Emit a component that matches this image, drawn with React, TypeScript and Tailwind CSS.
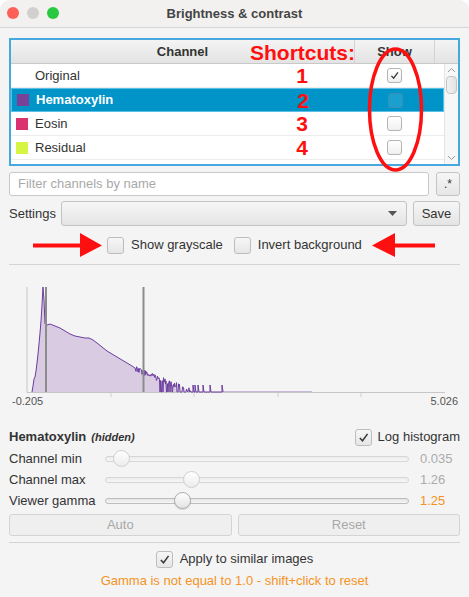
import React from "react";

type Channel = {
  name: string;
  color?: string;
  shortcut: string;
  show?: boolean;
  selected?: boolean;
};

const channels: Channel[] = [
  { name: "Original", shortcut: "1", show: true },
  { name: "Hematoxylin", color: "bg-[#7a4199]", shortcut: "2", selected: true },
  { name: "Eosin", color: "bg-[#d9326e]", shortcut: "3" },
  { name: "Residual", color: "bg-[#d6f542]", shortcut: "4" },
];

const Check = () => (
  <svg viewBox="0 0 16 16" className="h-full w-full">
    <path d="M3.5 8.5 L6.8 12 L13 3.5" fill="none" stroke="#3a3a3a" strokeWidth="1.9" />
  </svg>
);

// table cell checkbox
const TableBox = ({ checked, selected }: { checked?: boolean; selected?: boolean }) => (
  <div
    className={
      selected
        ? "h-[15px] w-[15px] rounded-[3px] border border-[#3b8fb5] bg-[#1a9fcf]"
        : "h-[15px] w-[15px] rounded-[3px] border border-[#b4b4b4] bg-gradient-to-b from-white to-[#f0f0f0] p-[1px]"
    }
  >
    {checked && <Check />}
  </div>
);

// regular form checkbox
const Box = ({ checked }: { checked?: boolean }) => (
  <div className="h-[17px] w-[17px] shrink-0 rounded-[3px] border border-[#bdbdbd] bg-gradient-to-b from-[#f6f6f6] to-[#e6e6e6] p-[1px]">
    {checked && <Check />}
  </div>
);

const Slider = ({ label, pos, value, highlight }: { label: string; pos: number; value: string; highlight?: boolean }) => (
  <div className="flex h-[21px] items-center">
    <span className="w-[96px] text-[13px] text-[#333]">{label}</span>
    <div className="relative flex h-[21px] w-[304px] items-center">
      <div
        className={
          highlight
            ? "h-[6px] w-full rounded-full border border-[#bdbdbd] bg-gradient-to-b from-[#e4e4e4] to-[#f6f6f6]"
            : "h-[6px] w-full rounded-full border border-[#d6d6d6] bg-gradient-to-b from-[#ececec] to-[#f7f7f7]"
        }
      />
      <div
        className={
          highlight
            ? "absolute top-[2px] h-[17px] w-[17px] rounded-full border border-[#a9a9a9] bg-gradient-to-b from-white to-[#e3e3e3] shadow-[0_1px_1px_rgba(0,0,0,0.15)]"
            : "absolute top-[2px] h-[17px] w-[17px] rounded-full border border-[#cfcfcf] bg-gradient-to-b from-white to-[#ececec]"
        }
        style={{ left: pos - 8.5 }}
      />
    </div>
    <span className={highlight ? "ml-[11px] text-[13px] text-[#f5931f]" : "ml-[11px] text-[13px] text-[#ababab]"}>
      {value}
    </span>
  </div>
);

// histogram curve in page coordinates
const head: [number, number][] = [
  [32, 392], [33, 386], [34, 379], [35, 377], [36, 371], [37, 363], [38, 354], [39, 344], [40, 333],
  [41, 321], [42, 305], [43, 287], [44, 300], [45, 324], [47, 325], [50, 324], [55, 326], [60, 328],
  [65, 331], [70, 334], [75, 336], [80, 337], [85, 338], [89, 338], [93, 340], [97, 343], [102, 347],
  [107, 351], [112, 354], [117, 357], [122, 360], [127, 363], [132, 366], [135, 368],
];

let seed = 12345;
const rand = () => {
  seed = (seed * 16807) % 2147483647;
  return seed / 2147483647;
};

const noisy: [number, number][] = [];
for (let x = 136; x <= 190; x += 0.5) {
  const base = Math.min(391, 369 + (x - 135) * 0.4);
  const dropChance = x < 154 ? 0 : x < 170 ? 0.2 : 0.4;
  const y = rand() < dropChance ? 392 : base + (rand() - 0.5) * 6;
  noisy.push([x, Math.min(392, y)]);
}

const spikes = [193, 195, 198, 203, 210, 222];

function Histogram() {
  const line = [...head, ...noisy].map(([x, y], i) => `${i ? "L" : "M"}${x} ${y.toFixed(1)}`).join(" ");
  const spikePath = spikes.map((x) => `L${x} 392 L${x} 385 L${x + 1} 392`).join(" ");
  const stroke = `${line} L191 392 ${spikePath}`;
  const fill = `${line} L191 392 Z`;
  return (
    <svg viewBox="9 265 451 145" width={451} height={145} className="block">
      <path d={fill} fill="#d8cbe2" />
      <line x1={223} y1={392} x2={312} y2={392} stroke="#b8a6cb" strokeWidth={1.5} />
      <line x1={27} y1={287} x2={27} y2={392.5} stroke="#c6c6c6" />
      <line x1={27} y1={392.5} x2={445} y2={392.5} stroke="#c6c6c6" />
      {[111, 194, 278, 361].map((x) => (
        <line key={x} x1={x} y1={393} x2={x} y2={397} stroke="#cfcfcf" />
      ))}
      <path d={stroke} fill="none" stroke="#6b3d9e" strokeWidth={1} />
      <line x1={46} y1={287} x2={46} y2={392} stroke="#8c8c8c" strokeWidth={2} />
      <line x1={143.5} y1={287} x2={143.5} y2={392} stroke="#8c8c8c" strokeWidth={2} />
      <text x={12} y={405} fontSize={11} fill="#555">-0.205</text>
      <text x={458} y={405} fontSize={11} fill="#555" textAnchor="end">5.026</text>
    </svg>
  );
}

export default function App() {
  return (
    <div className="relative h-[597px] w-[469px] overflow-hidden rounded-t-[10px] bg-[#f4f4f4] font-['Liberation_Sans',Arial,sans-serif] text-[#333]">
      {/* title bar */}
      <div className="relative flex h-[28px] items-center justify-center border-b border-[#d6d6d6] bg-[#f2f1f0]">
        <div className="absolute left-[7px] top-[7px] flex gap-[8px]">
          <span className="h-[12px] w-[12px] rounded-full bg-[#fe5f57]" />
          <span className="h-[12px] w-[12px] rounded-full bg-[#d1d0ce]" />
          <span className="h-[12px] w-[12px] rounded-full bg-[#28c840]" />
        </div>
        <span className="text-[13px] font-bold text-[#444]">Brightness &amp; contrast</span>
      </div>

      <div className="px-[9px]">
        {/* channel table */}
        <div className="mt-[10px] h-[128px] overflow-hidden border-2 border-[#45a8df] bg-white">
          <div className="flex h-[24px] border-b border-[#c9c9c9] bg-gradient-to-b from-[#f4f4f4] to-[#e3e3e3]">
            <div className="relative flex w-[344px] items-center justify-center border-r border-[#d2d2d2] text-[13px] font-bold text-[#333]">
              Channel
              <span className="absolute right-[-1px] top-[-3px] text-[21px] font-bold text-[#ff1010]">Shortcuts:</span>
            </div>
            <div className="flex w-[80px] items-center justify-center border-r border-[#d2d2d2] text-[13px] font-bold text-[#333]">
              Show
            </div>
            <div className="flex-1" />
          </div>
          <div className="flex h-[100px]">
            <div className="flex-1">
              {channels.map((c) => (
                <div
                  key={c.name}
                  className={
                    c.selected
                      ? "flex h-[24px] items-center border border-[#5cc0e6] bg-[#0094c8] text-white"
                      : "flex h-[24px] items-center border-b border-[#ececec] text-[#333]"
                  }
                >
                  <div className="flex w-[343px] items-center">
                    {c.color ? (
                      <span className={`ml-[5px] h-[12px] w-[12px] ${c.color}`} />
                    ) : (
                      <span className="ml-[5px] h-[12px] w-[12px]" />
                    )}
                    <span className={c.selected ? "ml-[7px] text-[13px] font-bold" : "ml-[7px] text-[13px]"}>
                      {c.name}
                    </span>
                    <span className="ml-auto mr-[37px] w-[30px] text-center text-[21px] font-bold leading-none text-[#ff1010]">
                      {c.shortcut}
                    </span>
                  </div>
                  <div className="flex w-[80px] justify-center">
                    <TableBox checked={c.show} selected={c.selected} />
                  </div>
                </div>
              ))}
            </div>
            {/* scrollbar */}
            <div className="flex w-[14px] flex-col items-center border-l border-[#e4e4e4] bg-[#f7f7f7]">
              <svg width="9" height="6" viewBox="0 0 9 6" className="mt-[3px]">
                <path d="M1 5 L4.5 1.5 L8 5" fill="none" stroke="#999" strokeWidth="1" />
              </svg>
              <div className="mt-[3px] h-[18px] w-[11px] rounded-[4px] border border-[#c4c4c4] bg-gradient-to-r from-[#f2f2f2] to-[#e2e2e2]" />
              <svg width="9" height="6" viewBox="0 0 9 6" className="mt-auto mb-[3px]">
                <path d="M1 1 L4.5 4.5 L8 1" fill="none" stroke="#999" strokeWidth="1" />
              </svg>
            </div>
          </div>
        </div>

        {/* filter */}
        <div className="mt-[6px] flex h-[24px] gap-[7px]">
          <div className="flex flex-1 items-center rounded-[3px] border border-[#c9c9c9] bg-white pl-[8px] text-[13px] text-[#a9a9a9]">
            Filter channels by name
          </div>
          <div className="flex w-[24px] items-center justify-center rounded-[3px] border border-[#c4c4c4] bg-gradient-to-b from-[#f6f6f6] to-[#e6e6e6] text-[12px] text-[#333]">
            .*
          </div>
        </div>

        {/* settings */}
        <div className="mt-[5px] flex h-[25px] items-center">
          <span className="w-[52px] text-[13px] text-[#333]">Settings</span>
          <div className="flex h-full w-[346px] items-center justify-end rounded-[3px] border border-[#c4c4c4] bg-gradient-to-b from-[#f6f6f6] to-[#e4e4e4] pr-[9px]">
            <svg width="9" height="5" viewBox="0 0 9 5">
              <path d="M0 0 L9 0 L4.5 5 Z" fill="#555" />
            </svg>
          </div>
          <div className="ml-[6px] flex h-full flex-1 items-center justify-center rounded-[3px] border border-[#c4c4c4] bg-gradient-to-b from-[#f6f6f6] to-[#e4e4e4] text-[13px] text-[#333]">
            Save
          </div>
        </div>

        {/* display options */}
        <div className="mt-[9px] flex h-[20px] items-center pl-[98px]">
          <Box />
          <span className="ml-[7px] text-[13px] text-[#333]">Show grayscale</span>
          <span className="ml-[11px]">
            <Box />
          </span>
          <span className="ml-[7px] text-[13px] text-[#333]">Invert background</span>
        </div>

        <div className="mt-[9px] h-px bg-[#d4d4d4]" />
      </div>

      {/* histogram */}
      <div className="pl-[9px]">
        <Histogram />
      </div>

      <div className="px-[9px]">
        <div className="mt-[17px] flex h-[20px] items-center">
          <span className="text-[13px] font-bold text-[#333]">Hematoxylin</span>
          <span className="ml-[5px] text-[11px] font-bold italic text-[#333]">(hidden)</span>
          <span className="ml-auto">
            <Box checked />
          </span>
          <span className="ml-[6px] text-[13px] text-[#333]">Log histogram</span>
        </div>

        <div className="mt-px">
          <Slider label="Channel min" pos={16} value="0.035" />
          <Slider label="Channel max" pos={86} value="1.26" />
          <Slider label="Viewer gamma" pos={77} value="1.25" highlight />
        </div>

        <div className="mt-[3px] flex h-[22px] gap-[6px]">
          <div className="flex flex-1 items-center justify-center rounded-[3px] border border-[#d4d4d4] bg-[#efefef] text-[13px] text-[#a8a8a8]">
            Auto
          </div>
          <div className="flex flex-1 items-center justify-center rounded-[3px] border border-[#d4d4d4] bg-[#efefef] text-[13px] text-[#a8a8a8]">
            Reset
          </div>
        </div>

        <div className="mt-[6px] h-px bg-[#d4d4d4]" />

        <div className="mt-[6px] flex h-[20px] items-center justify-center">
          <Box checked />
          <span className="ml-[7px] text-[13px] text-[#333]">Apply to similar images</span>
        </div>

        <div className="mt-[4px] flex h-[16px] items-center justify-center text-[13px] text-[#f5931f]">
          Gamma is not equal to 1.0 - shift+click to reset
        </div>
      </div>

      {/* red annotations */}
      <svg className="pointer-events-none absolute left-0 top-0" width={469} height={597} viewBox="0 0 469 597">
        <ellipse cx={395.5} cy={109.5} rx={26} ry={60.5} fill="none" stroke="#ff1010" strokeWidth={3.5} />
        <path d="M33 243.5 L80 243.5 L80 233 L102 245.5 L80 257 L80 247.5 L33 247.5 Z" fill="#ff1010" />
        <path d="M435 243.5 L395 243.5 L395 233 L372 245.5 L395 257 L395 247.5 L435 247.5 Z" fill="#ff1010" />
      </svg>
    </div>
  );
}
